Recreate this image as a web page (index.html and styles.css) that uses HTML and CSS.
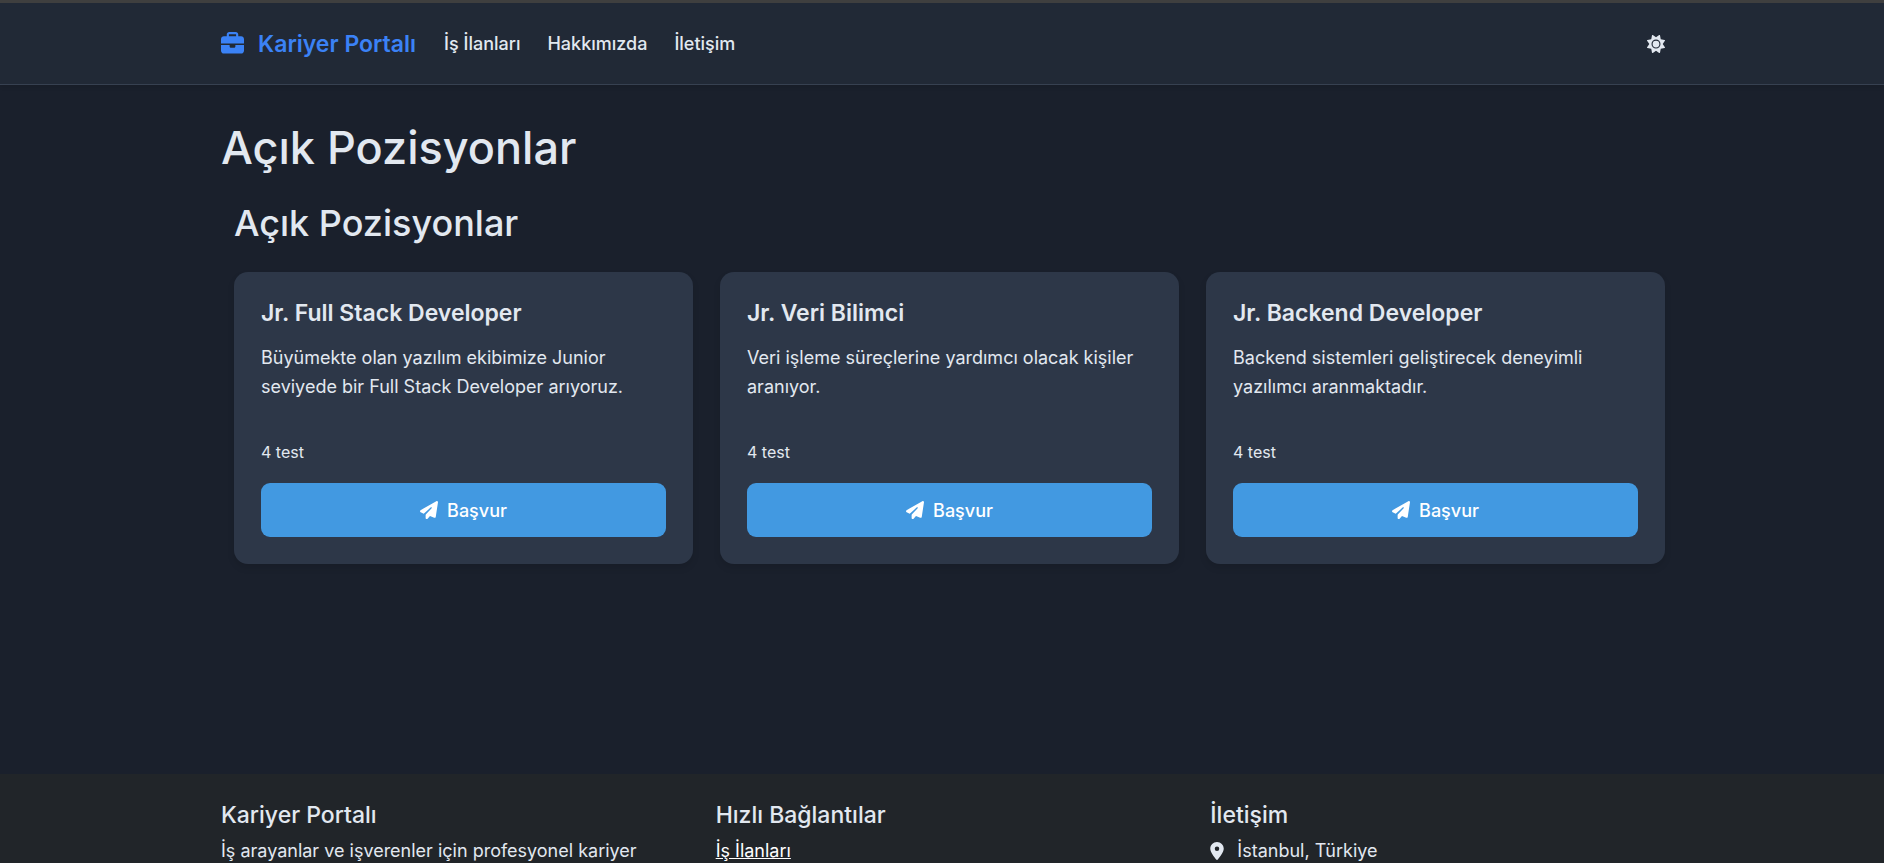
FILE: index.html
```html
<!DOCTYPE html>
<html lang="tr">
<head>
<meta charset="utf-8">
<title>Kariyer Portalı</title>
<link rel="stylesheet" href="styles.css">
</head>
<body>
<svg class="sprite" aria-hidden="true">
  <symbol id="briefcase" viewBox="0 0 512 512"><path d="M184 48H328c4.4 0 8 3.6 8 8V96H176V56c0-4.4 3.6-8 8-8zm-56 8V96H64C28.7 96 0 124.7 0 160v96H192 320 512V160c0-35.3-28.7-64-64-64H384V56c0-30.9-25.1-56-56-56H184c-30.9 0-56 25.1-56 56zM512 288H320v32c0 17.7-14.3 32-32 32H224c-17.7 0-32-14.3-32-32V288H0V416c0 35.3 28.7 64 64 64H448c35.3 0 64-28.7 64-64V288z"/></symbol>
  <symbol id="sun" viewBox="0 0 512 512"><path d="M361.5 1.2c5 2.1 8.6 6.6 9.6 11.9L391 121l107.9 19.8c5.3 1 9.8 4.6 11.9 9.6s1.5 10.7-1.6 15.2L446.9 256l62.3 90.3c3.1 4.5 3.7 10.2 1.6 15.2s-6.6 8.6-11.9 9.6L391 391 371.1 498.9c-1 5.3-4.6 9.8-9.6 11.9s-10.7 1.5-15.2-1.6L256 446.9l-90.3 62.3c-4.5 3.1-10.2 3.7-15.2 1.6s-8.6-6.6-9.6-11.9L121 391 13.1 371.1c-5.3-1-9.8-4.6-11.9-9.6s-1.5-10.7 1.6-15.2L65.1 256 2.8 165.7c-3.1-4.5-3.7-10.2-1.6-15.2s6.6-8.6 11.9-9.6L121 121 140.9 13.1c1-5.3 4.6-9.8 9.6-11.9s10.7-1.5 15.2 1.6L256 65.1 346.3 2.8c4.5-3.1 10.2-3.7 15.2-1.6zM160 256a96 96 0 1 1 192 0 96 96 0 1 1 -192 0zm224 0a128 128 0 1 0 -256 0 128 128 0 1 0 256 0z"/></symbol>
  <symbol id="plane" viewBox="0 0 512 512"><path d="M498.1 5.6c10.1 7 15.4 19.1 13.5 31.2l-64 416c-1.5 9.7-7.4 18.2-16 23s-18.9 5.4-28 1.6L284 427.7l-68.5 74.1c-8.9 9.7-22.9 12.9-35.2 8.1S160 493.2 160 480V396.4c0-4 1.5-7.8 4.2-10.7L331.8 202.8c5.8-6.3 5.6-16-.4-22s-15.7-6.4-22-.7L106 360.8 17.7 316.6C7.1 311.3 .3 300.7 0 288.9s5.9-22.8 16.1-28.7l448-256c10.7-6.1 23.9-5.5 34 1.4z"/></symbol>
  <symbol id="pin" viewBox="0 0 384 512"><path d="M215.7 499.2C267 435 384 279.4 384 192C384 86 298 0 192 0S0 86 0 192c0 87.4 117 243 168.3 307.2c12.3 15.3 35.1 15.3 47.4 0zM192 128a64 64 0 1 1 0 128 64 64 0 1 1 0-128z"/></symbol>
</svg>
<header class="navbar">
  <div class="container navbar-inner">
    <a class="brand" href="#"><svg class="brand-icon" aria-hidden="true"><use href="#briefcase"/></svg>Kariyer Portalı</a>
    <nav class="nav">
      <a href="#">İş İlanları</a>
      <a href="#">Hakkımızda</a>
      <a href="#">İletişim</a>
    </nav>
    <button class="theme-toggle" type="button" aria-label="Tema"><svg class="icon" aria-hidden="true"><use href="#sun"/></svg></button>
  </div>
</header>
<main class="container main">
  <h1>Açık Pozisyonlar</h1>
  <section class="positions">
    <h2>Açık Pozisyonlar</h2>
    <div class="cards">
      <article class="card">
        <h3>Jr. Full Stack Developer</h3>
        <p>Büyümekte olan yazılım ekibimize Junior seviyede bir Full Stack Developer arıyoruz.</p>
        <small>4 test</small>
        <button class="apply" type="button"><svg class="icon" aria-hidden="true"><use href="#plane"/></svg>Başvur</button>
      </article>
      <article class="card">
        <h3>Jr. Veri Bilimci</h3>
        <p>Veri işleme süreçlerine yardımcı olacak kişiler aranıyor.</p>
        <small>4 test</small>
        <button class="apply" type="button"><svg class="icon" aria-hidden="true"><use href="#plane"/></svg>Başvur</button>
      </article>
      <article class="card">
        <h3>Jr. Backend Developer</h3>
        <p>Backend sistemleri geliştirecek deneyimli yazılımcı aranmaktadır.</p>
        <small>4 test</small>
        <button class="apply" type="button"><svg class="icon" aria-hidden="true"><use href="#plane"/></svg>Başvur</button>
      </article>
    </div>
  </section>
</main>
<footer class="footer">
  <div class="container footer-grid">
    <div>
      <h4>Kariyer Portalı</h4>
      <p>İş arayanlar ve işverenler için profesyonel kariyer</p>
    </div>
    <div>
      <h4>Hızlı Bağlantılar</h4>
      <a href="#">İş İlanları</a>
    </div>
    <div>
      <h4>İletişim</h4>
      <p class="address"><svg class="pin" aria-hidden="true"><use href="#pin"/></svg>İstanbul, Türkiye</p>
    </div>
  </div>
</footer>
</body>
</html>
```
FILE: styles.css
```css
* {
  box-sizing: border-box;
  margin: 0;
}

body {
  display: flex;
  flex-direction: column;
  height: 100vh;
  overflow: hidden;
  padding-left: 15px;
  background: #1a202c;
  color: #e2e8f0;
  font: 400 18px/29px Inter, sans-serif;
}

.sprite {
  position: absolute;
  width: 0;
  height: 0;
}

svg {
  flex: none;
  fill: currentColor;
}

button {
  border: 0;
  padding: 0;
  background: none;
  color: inherit;
  font: inherit;
  cursor: pointer;
}

.container {
  width: 100%;
  max-width: 1485px;
  margin: 0 auto;
  padding: 0 14px;
}

.icon {
  width: 18px;
  height: 18px;
}

.navbar {
  flex: none;
  margin-left: -15px;
  padding: 20px 0 20px 15px;
  background: #212936;
  border-top: 3px solid #3f3f3f;
  border-bottom: 1px solid #374151;
  box-shadow: 0 2px 4px rgba(0, 0, 0, 0.1);
}

.navbar-inner {
  display: flex;
  align-items: center;
  min-height: 41px;
}

.brand {
  display: flex;
  align-items: center;
  gap: 14px;
  color: #3b82f6;
  font-size: 23px;
  font-weight: 600;
  line-height: 30px;
  text-decoration: none;
}

.brand-icon {
  width: 23px;
  height: 23px;
}

.nav {
  display: flex;
  flex: 1;
  gap: 27px;
  margin-left: 28px;
  font-weight: 500;
}

.nav a {
  color: inherit;
  text-decoration: none;
}

.theme-toggle {
  display: flex;
  margin-right: 13px;
}

.main {
  flex: none;
  padding-top: 36px;
  padding-bottom: 210px;
}

h1,
h2,
h3,
h4 {
  font-weight: 500;
}

h1 {
  margin-bottom: 27px;
  font-size: 45px;
  line-height: 54px;
}

.positions {
  padding: 0 13px;
}

h2 {
  margin-bottom: 27px;
  font-size: 36px;
  line-height: 43px;
}

.cards {
  display: grid;
  grid-template-columns: repeat(3, 1fr);
  gap: 27px;
}

.card {
  display: flex;
  flex-direction: column;
  padding: 27px;
  border-radius: 14px;
  background: #2d3748;
  box-shadow: 0 4px 7px rgba(0, 0, 0, 0.1);
}

h3 {
  margin-bottom: 16px;
  font-size: 23px;
  font-weight: 600;
  line-height: 28px;
}

.card p {
  flex: 1;
  margin-bottom: 39px;
}

small {
  margin-bottom: 18px;
  font-size: 16px;
  line-height: 25px;
}

.apply {
  display: flex;
  align-items: center;
  justify-content: center;
  gap: 9px;
  min-height: 54px;
  border-radius: 9px;
  background: #4299e1;
  color: #fff;
  font-weight: 500;
}

.footer {
  flex: 1 0 auto;
  margin-left: -15px;
  padding: 27px 0 0 15px;
  background: #212529;
}

.footer-grid {
  display: grid;
  grid-template-columns: repeat(3, 1fr);
  gap: 27px;
}

h4 {
  margin-bottom: 7px;
  font-size: 23px;
  line-height: 28px;
}

.footer a {
  color: #fff;
}

.address {
  display: flex;
  align-items: center;
  gap: 13px;
}

.pin {
  width: 14px;
  height: 18px;
}
```
